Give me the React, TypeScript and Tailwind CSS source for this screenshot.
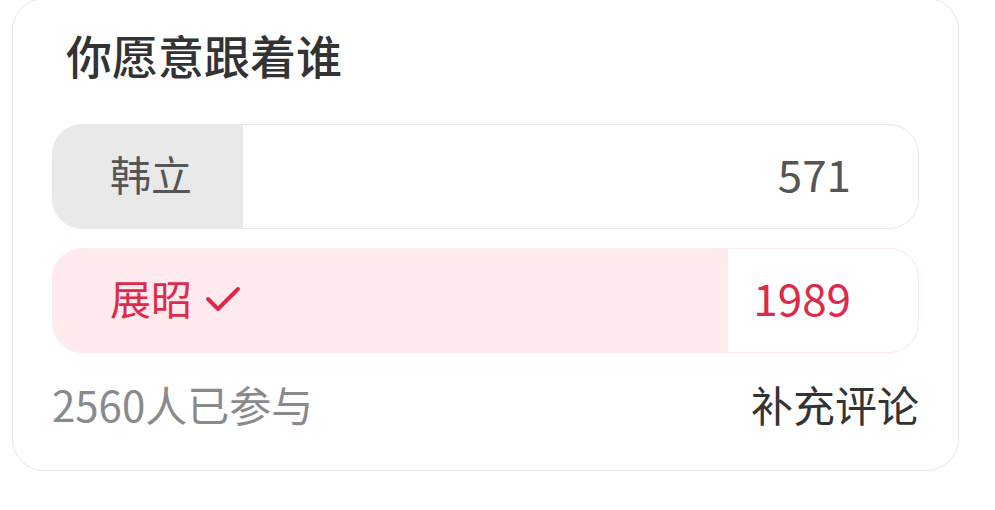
const font = { fontFamily: '"Noto Sans CJK SC", "Noto Sans", sans-serif' };

type Option = { name: string; votes: number; picked?: boolean };

const options: Option[] = [
  { name: '韩立', votes: 571 },
  { name: '展昭', votes: 1989, picked: true },
];
const total = 2560;

function OptionRow({ opt }: { opt: Option }) {
  // bar width uses the rounded percentage
  const pct = Math.round((opt.votes / total) * 100);
  return (
    <div
      className={`relative h-[105px] rounded-[30px] border overflow-hidden flex items-center pb-[7px] ${
        opt.picked ? 'border-[#fbe9ec]' : 'border-[#e6e6e6]'
      }`}
    >
      <div
        className={`absolute left-0 top-0 bottom-0 ${opt.picked ? 'bg-[#ffebee]' : 'bg-[#e9e9e9]'}`}
        style={{ width: `${pct}%` }}
      />
      <div
        className={`relative flex-1 flex items-center pl-[57px] text-[41px] leading-none ${
          opt.picked ? 'text-[#e0294a]' : 'text-[#555555]'
        }`}
      >
        {opt.name}
        {opt.picked && (
          <svg width="36" height="28" viewBox="0 0 36 28" className="ml-[13px] mt-[3px]">
            <path d="M3 14 L13 24 L33 4" fill="none" stroke="#e0294a" strokeWidth="4" strokeLinecap="round" strokeLinejoin="round" />
          </svg>
        )}
      </div>
      <div
        className={`relative pr-[67px] text-[44px] leading-none ${opt.picked ? 'text-[#e0294a]' : 'text-[#555555]'}`}
      >
        {opt.votes}
      </div>
    </div>
  );
}

export default function App() {
  return (
    <div className="w-[995px] h-[510px] bg-white overflow-hidden" style={font}>
      <div className="ml-[12px] mt-[-2px] w-[947px] h-[473px] rounded-[32px] border border-[#e6e6e6] px-[39px] flex flex-col">
        <h1 className="mt-[25px] pl-[14px] h-[60px] leading-[60px] text-[46px] font-medium text-[#333333]">
          你愿意跟着谁
        </h1>
        <div className="mt-[40px] flex flex-col gap-[19px]">
          {options.map(o => (
            <OptionRow key={o.name} opt={o} />
          ))}
        </div>
        <div className="mt-[20px] h-[60px] flex items-center justify-between">
          <span className="text-[42px] text-[#8a8a8a]">{total}人已参与</span>
          <span className="text-[42px] text-[#333333]">补充评论</span>
        </div>
      </div>
    </div>
  );
}
